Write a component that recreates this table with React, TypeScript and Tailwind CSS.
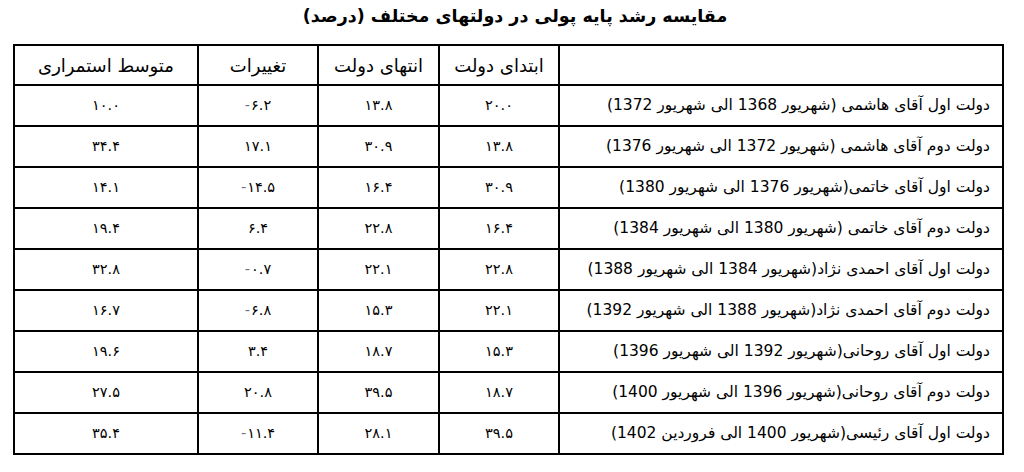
const rows: [string, string, string, string, string][] = [
  ['دولت اول آقای هاشمی (شهریور 1368 الی شهریور 1372)', '۲۰.۰', '۱۳.۸', '-۶.۲', '۱۰.۰'],
  ['دولت دوم آقای هاشمی (شهریور 1372 الی شهریور 1376)', '۱۳.۸', '۳۰.۹', '۱۷.۱', '۳۴.۴'],
  ['دولت اول آقای خاتمی(شهریور 1376 الی شهریور 1380)', '۳۰.۹', '۱۶.۴', '-۱۴.۵', '۱۴.۱'],
  ['دولت دوم آقای خاتمی (شهریور 1380 الی شهریور 1384)', '۱۶.۴', '۲۲.۸', '۶.۴', '۱۹.۴'],
  ['دولت اول آقای احمدی نژاد(شهریور 1384 الی شهریور 1388)', '۲۲.۸', '۲۲.۱', '-۰.۷', '۳۲.۸'],
  ['دولت دوم آقای احمدی نژاد(شهریور 1388 الی شهریور 1392)', '۲۲.۱', '۱۵.۳', '-۶.۸', '۱۶.۷'],
  ['دولت اول آقای روحانی(شهریور 1392 الی شهریور 1396)', '۱۵.۳', '۱۸.۷', '۳.۴', '۱۹.۶'],
  ['دولت دوم آقای روحانی(شهریور 1396 الی شهریور 1400)', '۱۸.۷', '۳۹.۵', '۲۰.۸', '۲۷.۵'],
  ['دولت اول آقای رئیسی(شهریور 1400 الی فروردین 1402)', '۳۹.۵', '۲۸.۱', '-۱۱.۴', '۳۵.۴'],
];

function Num({ value }: { value: string }) {
  const neg = value.startsWith('-');
  return (
    <span dir="ltr" className="inline-flex items-center">
      {neg && <span className="text-gray-500 mr-[1px]">-</span>}
      {neg ? value.slice(1) : value}
    </span>
  );
}

export default function App() {
  const cell = 'border-2 border-black text-center';
  return (
    <div
      dir="rtl"
      className="w-[1024px] h-[472px] bg-white text-black"
      style={{ fontFamily: '"DejaVu Sans", "Noto Sans", sans-serif' }}
    >
      <h1 className="h-[44px] pt-[3px] text-center text-[17.5px] font-bold leading-[26px] pl-[6px]">
        مقایسه رشد پایه پولی در دولتهای مختلف (درصد)
      </h1>
      <table className="mr-[20px] w-[989px] table-fixed border-collapse">
        <colgroup>
          <col className="w-[444px]" />
          <col className="w-[120px]" />
          <col className="w-[121px]" />
          <col className="w-[120px]" />
          <col className="w-[184px]" />
        </colgroup>
        <thead>
          <tr className="h-[40px] text-[18px]">
            <th className="border-2 border-black font-normal" />
            <th className={`${cell} font-normal`}>ابتدای دولت</th>
            <th className={`${cell} font-normal`}>انتهای دولت</th>
            <th className={`${cell} font-normal`}>تغییرات</th>
            <th className={`${cell} font-normal`}>متوسط استمراری</th>
          </tr>
        </thead>
        <tbody>
          {rows.map((r, i) => (
            <tr key={i} className="h-[41px]">
              <td className="border-2 border-black pr-[12px] text-right text-[15.5px]">{r[0]}</td>
              {r.slice(1).map((v, j) => (
                <td key={j} className={`${cell} text-[14.5px]`}>
                  <Num value={v} />
                </td>
              ))}
            </tr>
          ))}
        </tbody>
      </table>
    </div>
  );
}
